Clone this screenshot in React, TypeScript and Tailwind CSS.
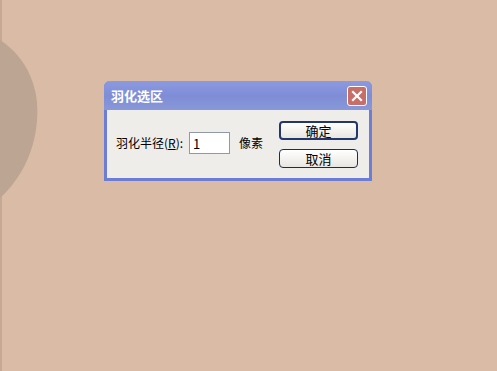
const font = { fontFamily: '"Noto Sans CJK SC", "Liberation Sans", sans-serif' };

const App = () => {
  return (
    <div className="relative w-[497px] h-[371px] bg-[#d9bba6] overflow-hidden" style={font}>
      <div className="absolute left-0 top-0 w-[2px] h-full bg-[#c7a893]" />
      <svg className="absolute left-0 top-[40px]" width="40" height="160" viewBox="0 0 40 160">
        <path d="M0 0 C 28 18, 40 50, 37 80 C 35 110, 22 138, 0 158 Z" fill="#bca592" />
      </svg>

      <div className="pl-[104px] pt-[81px]">
        <div className="w-[268px] h-[100px] rounded-t-[6px] border-[3px] border-t-0 border-[#6c7dd6] bg-[#efedea] flex flex-col">
          <div className="h-[29px] -mx-[3px] rounded-t-[6px] bg-gradient-to-b from-[#8b9ae0] via-[#7e8dd6] to-[#8898d8] flex items-center justify-between pl-[7px] pr-[5px]">
            <span className="text-white text-[13px] font-bold leading-none">羽化选区</span>
            <div className="w-[20px] h-[20px] rounded-[3px] border border-white bg-[#c86e68] flex items-center justify-center">
              <svg width="12" height="12" viewBox="0 0 12 12">
                <path d="M2 2 L10 10 M10 2 L2 10" stroke="white" strokeWidth="2.2" strokeLinecap="square" />
              </svg>
            </div>
          </div>
          <div className="flex-1 flex pl-[9px] pr-[11px] pt-[11px]">
            <div className="flex items-center h-[22px] mt-[11px] text-[12px] text-black">
              <span>
                羽化半径(<span className="underline">R</span>):
              </span>
              <div className="ml-[6px] w-[41px] h-[22px] border border-[#8e9aa6] bg-white flex items-center px-[3px] text-[13px] leading-none">
                1
              </div>
              <span className="ml-[9px]">像素</span>
            </div>
            <div className="ml-auto flex flex-col gap-[9px]">
              <button className="w-[79px] h-[19px] rounded-[4px] border-2 border-[#24366e] bg-gradient-to-b from-white to-[#e8e6e0] text-[13px] leading-none text-black flex items-center justify-center">
                确定
              </button>
              <button className="w-[79px] h-[19px] rounded-[4px] border border-[#1f2a5a] bg-gradient-to-b from-white to-[#e8e6e0] text-[13px] leading-none text-black flex items-center justify-center">
                取消
              </button>
            </div>
          </div>
        </div>
      </div>
    </div>
  );
};

export default App;
